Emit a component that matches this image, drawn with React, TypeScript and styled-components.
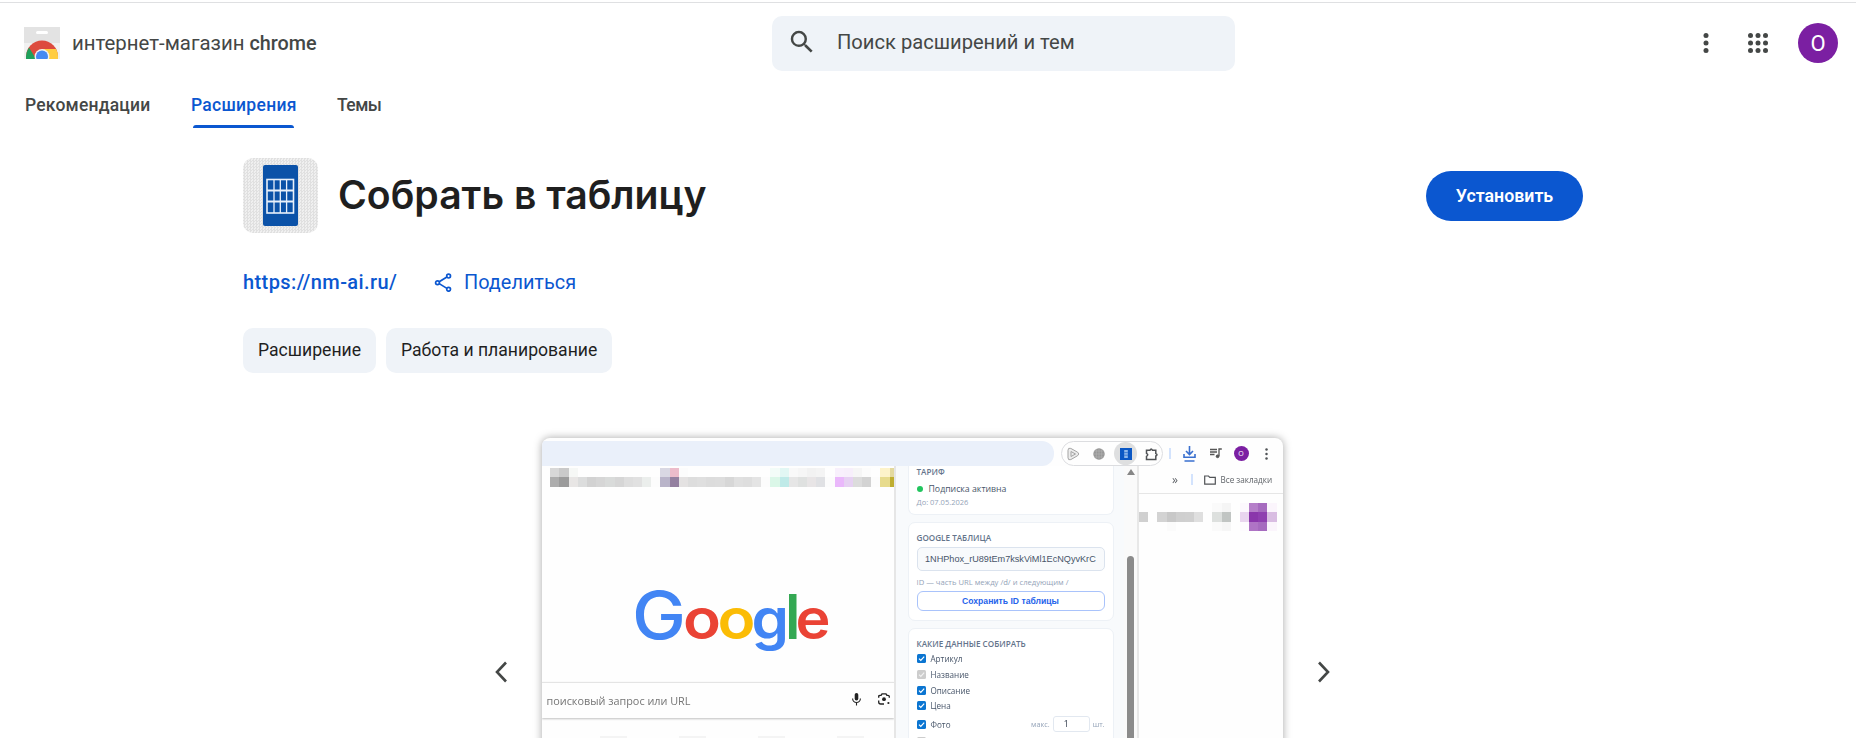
import React from 'react';
import styled, { createGlobalStyle } from 'styled-components';

const sans = `Roboto, 'Open Sans', sans-serif`;
const panelSans = `'Open Sans', 'Noto Sans', sans-serif`;
const blue = '#0b57d0';

const GlobalStyle = createGlobalStyle`
  * { box-sizing: border-box; }
  body { margin: 0; background: #fff; font-family: ${sans}; color: #1f1f1f; }
  a { color: inherit; text-decoration: none; }
  ul { list-style: none; margin: 0; padding: 0; }
`;

const Page = styled.div`
  height: 738px;
  padding-top: 2px;
  overflow: hidden;
`;

/* ---------- header ---------- */

const Header = styled.header`
  height: 85px;
  border-top: 1px solid #dfe0e2;
  display: flex;
  align-items: center;
  padding: 0 18px 4px 24px;
`;

const Brand = styled.a`
  width: 748px;
  display: flex;
  align-items: center;
  gap: 12px;
  font-size: 20.4px;
  color: #444746;
  white-space: pre;
`;

const BrandName = styled.span`
  strong { font-weight: 500; font-size: 19.8px; }
`;

const Search = styled.div`
  width: 463px;
  height: 55px;
  border-radius: 10px;
  background: #eff3f8;
  display: flex;
  align-items: center;
  gap: 20px;
  padding: 0 15px 2px;
  color: #444746;
  font-size: 20.15px;
`;

const Actions = styled.div`
  margin-left: auto;
  display: flex;
  align-items: center;
`;

const IconButton = styled.button<{ $gap: number }>`
  border: 0;
  padding: 0;
  background: none;
  display: flex;
  margin-right: ${(p) => p.$gap}px;
`;

const Avatar = styled.div`
  width: 40px;
  height: 40px;
  border-radius: 50%;
  background: #7b1fa2;
  color: #fff;
  font-size: 22px;
  display: grid;
  place-items: center;
`;

const Tabs = styled.nav`
  display: flex;
  gap: 40px;
  padding-left: 25px;
`;

const Tab = styled.a<{ $active?: boolean; $width: number; $spacing: number }>`
  width: ${(p) => p.$width}px;
  height: 41px;
  padding-top: 7px;
  line-height: 22px;
  font-size: 17.5px;
  font-weight: 500;
  letter-spacing: ${(p) => p.$spacing}px;
  white-space: nowrap;
  color: ${(p) => (p.$active ? blue : '#444746')};
  &::after {
    content: '';
    display: block;
    margin: 9px 3px 0 2px;
    height: 3px;
    border-radius: 3px 3px 0 0;
    background: ${(p) => (p.$active ? blue : 'transparent')};
  }
`;

/* ---------- listing ---------- */

const Content = styled.main`
  width: 1340px;
  margin-left: 243px;
  padding-top: 30px;
`;

const TitleRow = styled.div`
  height: 75px;
  display: flex;
  align-items: center;
`;

const AppIcon = styled.div`
  width: 75px;
  height: 75px;
  border-radius: 10px;
  background: repeating-conic-gradient(#e0e0e0 0 25%, #f0f0f0 0 50%) 0 0 / 3px 3px;
  display: grid;
  place-items: center;
`;

const Title = styled.h1`
  margin: 0 0 1px 20px;
  font: 600 39.15px/50px Inter, sans-serif;
`;

const InstallButton = styled.button`
  margin: 0 0 0 auto;
  width: 157px;
  height: 50px;
  border: 0;
  border-radius: 25px;
  background: ${blue};
  color: #fff;
  font: 600 17.8px ${sans};
`;

const Links = styled.div`
  margin-top: 36px;
  height: 26px;
  display: flex;
  align-items: center;
  color: ${blue};
  font-size: 19.9px;
`;

const Site = styled.a`
  width: 191px;
  font-weight: 500;
  font-size: 20px;
  letter-spacing: 0.4px;
`;

const Share = styled.a`
  display: flex;
  align-items: center;
  gap: 12px;
`;

const Chips = styled.div`
  margin-top: 33px;
  display: flex;
  gap: 10px;
`;

const Chip = styled.a`
  height: 45px;
  padding: 0 15px;
  border-radius: 10px;
  background: #eff3f8;
  font-size: 17.6px;
  line-height: 45px;
`;

const Carousel = styled.section`
  margin-top: 65px;
  display: flex;
  align-items: flex-start;
  padding-left: 252px;
`;

const Arrow = styled.button<{ $left: number; $right: number }>`
  border: 0;
  padding: 0;
  background: none;
  display: flex;
  margin: 223px ${(p) => p.$right}px 0 ${(p) => p.$left}px;
`;

/* ---------- carousel slide ---------- */

const Slide = styled.div`
  width: 741px;
  height: 463px;
  border-radius: 8px 8px 0 0;
  box-shadow: 0 0 8px rgba(0, 0, 0, 0.35);
  background: #fefefe;
  overflow: hidden;
`;

const Shot = styled.div`
  height: 100%;
  filter: blur(0.3px);
  font-family: ${panelSans};
`;

const BrowserBar = styled.div`
  height: 28px;
  padding-top: 3px;
  display: flex;
`;

const Omnibox = styled.div`
  width: 512px;
  height: 25px;
  margin-right: 7px;
  border-radius: 0 12px 12px 0;
  background: #eaf0fa;
`;

const Toolbar = styled.div`
  width: 102px;
  height: 25px;
  border: 1px solid #dcdde0;
  border-radius: 13px;
  display: flex;
  align-items: center;
  padding-left: 5px;
`;

const ActiveTool = styled.span`
  width: 23px;
  height: 23px;
  margin: 0 8px 0 9px;
  border-radius: 50%;
  background: #dedfe0;
  display: grid;
  place-items: center;
`;

const Divider = styled.span<{ $gap: number }>`
  width: 1.5px;
  height: 11px;
  background: #d3e3fd;
  margin: 0 ${(p) => p.$gap}px 0 6px;
`;

const BarIcons = styled.div`
  height: 25px;
  display: flex;
  align-items: center;
`;

const MiniAvatar = styled.span`
  width: 15px;
  height: 15px;
  border-radius: 50%;
  background: #7b1fa2;
  color: #fff;
  font-size: 7px;
  display: grid;
  place-items: center;
  margin: 0 16px 0 12px;
`;

const Columns = styled.div`
  display: flex;
  height: 435px;
`;

const NewTab = styled.div`
  width: 354px;
  overflow: hidden;
  border-right: 2px solid #e6e6e6;
`;

const Mosaic = styled.div<{ $top: number; $left: number }>`
  padding: ${(p) => p.$top}px 0 0 ${(p) => p.$left}px;
  overflow: hidden;
`;

const MosaicRow = styled.div`
  display: flex;
`;

const Cell = styled.i<{ $color: string }>`
  flex: none;
  width: 9.18px;
  height: 9.3px;
  background: ${(p) => p.$color};
`;

const Logo = styled.svg`
  display: block;
  margin: 98px 0 0 88px;
`;

const Prompt = styled.div`
  margin-top: 25px;
  height: 36px;
  border-top: 1px solid #e4e4e4;
  box-shadow: 0 1px 2px rgba(0, 0, 0, 0.25);
  display: flex;
  align-items: center;
  padding: 1px 4px 0 4.5px;
  color: #757575;
  font-size: 10.85px;
`;

const PromptIcons = styled.span`
  margin-left: auto;
  padding-bottom: 2px;
  display: flex;
  gap: 17px;
`;

const Shortcuts = styled.div`
  display: flex;
  gap: 52px;
  margin: 18px 0 0 58px;
  i { width: 27px; height: 9px; background: #f4f4f4; }
`;

const SidePanel = styled.div`
  width: 228px;
  padding: 0 0 0 11.5px;
  background: #f8fafc;
`;

const Card = styled.section<{ $height: number; $cut?: boolean }>`
  width: 206px;
  height: ${(p) => p.$height}px;
  margin-bottom: 7px;
  padding: ${(p) => (p.$cut ? 0 : 8.5)}px 8px 0;
  background: #fff;
  border: 1px solid #edf1f6;
  border-top-width: ${(p) => (p.$cut ? 0 : 1)}px;
  border-radius: ${(p) => (p.$cut ? '0 0 7px 7px' : '7px')};
`;

const CardTitle = styled.h2`
  margin: 0;
  font-size: 8.15px;
  line-height: 11px;
  font-weight: 600;
  color: #64748b;
  white-space: nowrap;
`;

const Status = styled.div`
  display: flex;
  align-items: center;
  gap: 6px;
  margin-top: 6px;
  font-size: 8.75px;
  line-height: 12px;
  font-weight: 500;
  color: #475569;
  &::before { content: ''; width: 6px; height: 6px; border-radius: 50%; background: #22c55e; }
`;

const Hint = styled.p<{ $top: number; $size: number }>`
  margin: ${(p) => p.$top}px 0 0;
  font-size: ${(p) => p.$size}px;
  line-height: 10px;
  color: #94a3b8;
  white-space: nowrap;
`;

const TableId = styled.div`
  margin-top: 4px;
  height: 24px;
  border: 1px solid #dbe3ee;
  border-radius: 5px;
  background: #f8fafc;
  padding: 0 7px 0 7.5px;
  font: 9.15px/23px 'Liberation Sans', sans-serif;
  color: #475569;
  white-space: nowrap;
`;

const SaveButton = styled.button`
  display: block;
  width: 100%;
  height: 20px;
  margin-top: 4px;
  padding: 0;
  border: 1.5px solid #a9c3fb;
  border-radius: 6px;
  background: #fff;
  color: #2563eb;
  font: 700 8.6px 'Liberation Sans', sans-serif;
`;

const FieldList = styled.ul`
  && { margin-top: 2.5px; }
`;

const Field = styled.li<{ $height: number }>`
  height: ${(p) => p.$height}px;
  display: flex;
  align-items: center;
  gap: 5px;
  font-size: 8.1px;
  color: #475569;
`;

const Amount = styled.span`
  margin-left: auto;
  display: flex;
  align-items: center;
  gap: 3px;
  font-size: 7.3px;
  color: #94a3b8;
  b {
    width: 37px;
    height: 16px;
    border: 1px solid #e2e8f0;
    border-radius: 3px;
    padding-right: 10px;
    font-size: 8.5px;
    font-weight: 500;
    line-height: 14px;
    text-align: center;
    color: #1e293b;
  }
`;

const Scroller = styled.div`
  width: 15px;
  padding-top: 3px;
  display: flex;
  flex-direction: column;
  align-items: center;
  gap: 81px;
  background: #fafafa;
  border-right: 2px solid #e8e8e8;
`;

const ScrollUp = styled.span`
  border: 4px solid transparent;
  border-top: 0;
  border-bottom: 6px solid #868686;
`;

const Thumb = styled.span`
  width: 6.5px;
  flex: 1;
  border-radius: 4px;
  background: #8b8b8b;
`;

const Remainder = styled.div`
  flex: 1;
  overflow: hidden;
`;

const Bookmarks = styled.div`
  height: 28px;
  border-bottom: 1px solid #e6e6e6;
  display: flex;
  align-items: center;
  padding-left: 33px;
  font-size: 8.15px;
  color: #5f6368;
  white-space: nowrap;
`;

const More = styled.span`
  width: 13px;
  font-size: 12px;
  line-height: 12px;
`;

/* ---------- icons ---------- */

const StoreLogo = () => (
  <svg width="36" height="32" viewBox="0 0 36 32">
    <rect width="36" height="32" fill="#f1f1f1" />
    <rect width="36" height="16" fill="#e3e3e3" />
    <rect x="12" y="4" width="12" height="3" rx="1.5" fill="#fff" />
    <circle cx="18" cy="29.500" r="16" fill="#dd4b3e" />
    <path d="M2 32V29.500Q2 25 5 20.500L12 32z" fill="#1fa05b" />
    <path d="M18 22h14.100Q34 25.500 34 29.500V32H18z" fill="#ffcd41" />
    <circle cx="18" cy="29.500" r="7.400" fill="#f1f1f1" />
    <circle cx="18" cy="29.500" r="6" fill="#4689f2" />
  </svg>
);

const SearchIcon = () => (
  <svg width="30" height="30" viewBox="0 0 24 24" fill="#444746">
    <path d="M15.5 14h-.79l-.28-.27A6.47 6.47 0 0 0 16 9.5 6.5 6.5 0 1 0 9.5 16c1.61 0 3.09-.59 4.23-1.57l.27.28v.79l5 4.99L20.49 19l-4.99-5zm-6 0C7.01 14 5 11.99 5 9.5S7.01 5 9.5 5 14 7.01 14 9.5 11.99 14 9.5 14z" />
  </svg>
);

const Dots = ({ cols }: { cols: number[] }) => (
  <svg width="30" height="30" viewBox="0 0 30 30" fill="#444746">
    {cols.map((x) => [7.5, 15, 22.5].map((y) => <circle key={`${x}-${y}`} cx={x} cy={y} r="2.5" />))}
  </svg>
);

const GridIcon = () => (
  <svg width="35" height="62" viewBox="0 0 35 62">
    <rect width="35" height="61" rx="2" fill="#0b52a8" />
    <g fill="none" stroke="#e8f0fa">
      <rect x="4" y="14.5" width="26.5" height="33.5" strokeWidth="1.6" />
      <path d="M11 15v33M17.3 15v33M23.6 15v33" strokeWidth="1.3" />
      <path d="M4 25.6h26.5M4 36.6h26.5" strokeWidth="2" />
    </g>
  </svg>
);

const ShareIcon = () => (
  <svg width="18" height="20" viewBox="0 0 18 20" fill="none" stroke={blue} strokeWidth="1.7">
    <circle cx="14.6" cy="4.1" r="1.9" />
    <circle cx="3.500" cy="10.7" r="1.9" />
    <circle cx="14.6" cy="17.3" r="1.9" />
    <path d="M5.200 9.800 12.900 5M5.200 11.600l7.700 4.800" />
  </svg>
);

const Chevron = ({ flip }: { flip?: boolean }) => (
  <svg width="12" height="22" viewBox="0 0 12 22" fill="none" stroke="#444746" strokeWidth="2.6">
    <path d={flip ? 'M1 1.5 10 11 1 20.5' : 'M11 1.5 2 11l9 9.5'} />
  </svg>
);

const PlayTool = () => (
  <svg width="13" height="14" viewBox="0 0 13 14" fill="#ececec" stroke="#a3a3a3">
    <path d="M1 3.2Q1 .4 3.8 1.4l6.800 3.800Q13 7 10.600 8.700L3.800 12.600Q1 13.600 1 10.800z" />
    <path d="m4 4.500 4.500 2.500L4 9.500z" fill="none" />
  </svg>
);

const GlobeTool = () => (
  <svg width="12" height="12" viewBox="0 0 12 12">
    <circle cx="6" cy="6" r="5.700" fill="#969696" />
    <path d="M0 6h12M6 0v12M1 3h10M1 9h10M3.300 1v10M8.700 1v10" stroke="#b5b5b5" strokeWidth=".6" />
  </svg>
);

const ToolGap = styled.span`
  width: 13px;
`;

const TableTool = () => (
  <svg width="12" height="12" viewBox="0 0 12 12">
    <rect width="12" height="12" fill="#0b57c4" />
    <rect x="4.200" y="2" width="3.600" height="8" fill="#8db6ea" />
    <path d="M4.200 4.600h3.600M4.200 7.200h3.600" stroke="#0b57c4" strokeWidth=".6" />
  </svg>
);

const PuzzleTool = () => (
  <svg width="14" height="14" viewBox="0 0 14 14" fill="none" stroke="#505356" strokeWidth="1.500">
    <path d="M1.500 3.200H5Q6.200.800 7.400 3.200h3.400v3.400q2.400 1 0 2.400v3.400H1.500V9.300Q4 7.800 1.500 6.300z" />
  </svg>
);

const DownloadIcon = () => (
  <svg width="13" height="16" viewBox="0 0 13 16" fill="none" stroke="#3a70cf" strokeWidth="1.600">
    <path d="M6.500 0v8M3 5l3.500 3.500L10 5M1 8v3.200h11V8M1.500 15h10" />
  </svg>
);

const MusicIcon = () => (
  <svg width="12" height="11" viewBox="0 0 12 11" stroke="#555" fill="#555">
    <path d="M0 1.500h7M0 4h7M0 6.500h4.500M9 8V1h2.800" fill="none" strokeWidth="1.300" />
    <circle cx="7.600" cy="8.300" r="1.400" />
  </svg>
);

const MoreIcon = () => (
  <svg width="3" height="12" viewBox="0 0 3 12" fill="#505356">
    <circle cx="1.500" cy="1.500" r="1.250" /><circle cx="1.500" cy="6" r="1.250" /><circle cx="1.500" cy="10.500" r="1.250" />
  </svg>
);

const FolderIcon = () => (
  <svg width="12" height="10" viewBox="0 0 12 10" fill="none" stroke="#505356" strokeWidth="1.200">
    <path d="M.7 1h3.800l1.300 1.300h5.500V9.200H.7z" />
  </svg>
);

const MicIcon = () => (
  <svg width="9" height="13" viewBox="0 0 9 13">
    <rect x="2.700" y="0" width="3.600" height="7.600" rx="1.800" fill="#222" />
    <path d="M.6 5.600a3.900 3.900 0 0 0 7.800 0M4.500 9.500V12.500" fill="none" stroke="#222" strokeWidth="1.100" />
  </svg>
);

const LensIcon = () => (
  <svg width="12" height="12" viewBox="0 0 12 12" fill="none" stroke="#222" strokeWidth="1.300">
    <path d="M.7 4.800V3.500q0-1.200 1.400-1.200h1L4 .8h4l.9 1.500h1q1.400 0 1.400 1.200v1.300M.7 7.600V9q0 2 2 2H6" />
    <circle cx="6" cy="6.200" r="1.900" fill="#222" stroke="none" />
    <circle cx="10.400" cy="10" r="1.100" fill="#222" stroke="none" />
  </svg>
);

const Check = ({ off }: { off?: boolean }) => (
  <svg width="9" height="9" viewBox="0 0 9 9">
    <rect width="9" height="9" rx="1.500" fill={off ? '#cdcdcd' : '#0b75d1'} />
    <path d="m2 4.600 1.800 1.800L7.200 2.600" fill="none" stroke={off ? '#f2f2f2' : '#fff'} strokeWidth="1.200" />
  </svg>
);

const logoLetters = [
  { char: 'G', x: 2, width: 54, size: 66, weight: 500, color: '#4285f4' },
  { char: 'o', x: 53, width: 38, size: 56, weight: 600, color: '#ea4335' },
  { char: 'o', x: 87.5, width: 38, size: 56, weight: 600, color: '#fbbc05' },
  { char: 'g', x: 121.500, width: 37.5, size: 56, weight: 600, color: '#4285f4' },
  { char: 'l', x: 154, width: 17.500, size: 62, weight: 500, color: '#34a853' },
  { char: 'e', x: 165.500, width: 35, size: 56, weight: 600, color: '#ea4335' },
];

const GoogleLogo = () => (
  <Logo width="210" height="72" viewBox="0 0 210 72" fontFamily="Inter, sans-serif">
    {logoLetters.map((l) => (
      <text
        key={l.x} x={l.x} y="54" fontSize={l.size} fontWeight={l.weight} fill={l.color}
        textLength={l.width} lengthAdjust="spacingAndGlyphs"
      >
        {l.char}
      </text>
    ))}
  </Logo>
);

/* ---------- pixelated strips ---------- */

const n = 'transparent';
const bookmarkPixels = [
  ['#d8d8d8', '#cacaca', '#f6f8f6', n, n, n, n, n, n, n, n, n, '#d9d8e3', '#ecbccb', '#fcfcfc', n, n, n, n, n, n, n, n, n,
    '#f3fcf8', '#e2f7f4', '#f9f9f9', '#f6f6f6', '#f2f2f2', '#f4f4f4', n, '#f8f0fc', '#f7effb', '#f6f6f6', '#fcfcfc', n, '#fdf3ca', '#e3d99e'],
  ['#adadad', '#9b9b9b', '#e8e6e5', '#dcdddd', '#d2d2d2', '#d6d6d6', '#d9dbda', '#d6d6d6', '#dedede', '#e1e1e1', '#ebeeec', '#fcfcfc',
    '#b9b4c9', '#9480a0', '#e4e2e2', '#dddddd', '#dfdfdf', '#dcdcdc', '#dddddd', '#d7d7d7', '#e0e0e0', '#dedede', '#e4e4e4', '#fcfcfc',
    '#dbf7e8', '#bfeae8', '#e6e6e6', '#dfe1e0', '#e8e5e6', '#e0e1e4', '#fcfcfc', '#eab8fb', '#e6d1f2', '#dcdcdc', '#d3d3d3', '#fcfcfc', '#e7db8d', '#bfae31'],
];

const profilePixels = [
  [n, n, n, n, n, n, n, n, '#fafafa', '#f5f5f5', n, '#fcf8fd', '#b57fc9', '#a66bbf', '#fbf5fc'],
  ['#d0d0d0', n, '#d3d3d3', '#c8c8c8', '#cfcfcf', '#d0d0d0', '#dfdfdf', n, '#dde0de', '#c1c5c3', n, '#e9d5ef', '#8a37ab', '#8f3fb0', '#d9bde2'],
  [n, n, n, '#fbfbfb', n, n, n, n, '#fafafa', '#f6f6f6', n, '#fdfbfe', '#af74c5', '#a66bbf', '#fbf5fc'],
];

const Pixels = ({ rows, top, left }: { rows: string[][]; top: number; left: number }) => (
  <Mosaic $top={top} $left={left}>
    {rows.map((row, y) => (
      <MosaicRow key={y}>{row.map((c, x) => <Cell key={x} $color={c} />)}</MosaicRow>
    ))}
  </Mosaic>
);

const IconGap = styled.span<{ $size: number }>`
  width: ${(p) => p.$size}px;
`;

const fields = [
  { label: 'Артикул', height: 15.7 },
  { label: 'Название', height: 15.7, off: true },
  { label: 'Описание', height: 15.7 },
  { label: 'Цена', height: 15.7 },
];

const BrowserShot = () => (
  <Shot>
    <BrowserBar>
      <Omnibox />
      <Toolbar>
        <PlayTool /><ToolGap /><GlobeTool /><ActiveTool><TableTool /></ActiveTool><PuzzleTool />
      </Toolbar>
      <BarIcons>
        <Divider $gap={12} />
        <DownloadIcon />
        <IconGap $size={14} />
        <MusicIcon />
        <MiniAvatar>O</MiniAvatar>
        <MoreIcon />
      </BarIcons>
    </BrowserBar>
    <Columns>
      <NewTab>
        <Pixels rows={bookmarkPixels} top={2} left={8.3} />
        <GoogleLogo />
        <Prompt>
          поисковый запрос или URL
          <PromptIcons><MicIcon /><LensIcon /></PromptIcons>
        </Prompt>
        <Shortcuts><i /><i /><i /><i /></Shortcuts>
      </NewTab>
      <SidePanel>
        <Card $height={49} $cut>
          <CardTitle>ТАРИФ</CardTitle>
          <Status>Подписка активна</Status>
          <Hint $top={1.5} $size={7.5}>До: 07.05.2026</Hint>
        </Card>
        <Card $height={99}>
          <CardTitle>GOOGLE ТАБЛИЦА</CardTitle>
          <TableId>1NHPhox_rU89tEm7kskViMl1EcNQyvKrC</TableId>
          <Hint $top={6.5} $size={7.65}>ID — часть URL между /d/ и следующим /</Hint>
          <SaveButton>Сохранить ID таблицы</SaveButton>
        </Card>
        <Card $height={200}>
          <CardTitle>КАКИЕ ДАННЫЕ СОБИРАТЬ</CardTitle>
          <FieldList>
            {fields.map((f) => (
              <Field key={f.label} $height={f.height}><Check off={f.off} />{f.label}</Field>
            ))}
            <Field $height={21}>
              <Check />Фото
              <Amount>макс.<b>1</b>шт.</Amount>
            </Field>
            <Field $height={13}><Check off /></Field>
          </FieldList>
        </Card>
      </SidePanel>
      <Scroller><ScrollUp /><Thumb /></Scroller>
      <Remainder>
        <Bookmarks>
          <More>»</More>
          <Divider $gap={11} />
          <FolderIcon />
          <IconGap $size={5} />
          Все закладки
        </Bookmarks>
        <Pixels rows={profilePixels} top={9} left={0} />
      </Remainder>
    </Columns>
  </Shot>
);

export default function App() {
  return (
    <Page>
      <GlobalStyle />
      <Header>
        <Brand href="#"><StoreLogo /><BrandName>интернет-магазин <strong>chrome</strong></BrandName></Brand>
        <Search><SearchIcon />Поиск расширений и тем</Search>
        <Actions>
          <IconButton $gap={22}><Dots cols={[15]} /></IconButton>
          <IconButton $gap={25}><Dots cols={[7.5, 15, 22.5]} /></IconButton>
          <Avatar>O</Avatar>
        </Actions>
      </Header>
      <Tabs>
        <Tab $width={126} $spacing={0.2}>Рекомендации</Tab>
        <Tab $width={106} $spacing={0.28} $active>Расширения</Tab>
        <Tab $width={44} $spacing={-0.5}>Темы</Tab>
      </Tabs>
      <Content>
        <TitleRow>
          <AppIcon><GridIcon /></AppIcon>
          <Title>Собрать в таблицу</Title>
          <InstallButton>Установить</InstallButton>
        </TitleRow>
        <Links>
          <Site href="#">https://nm-ai.ru/</Site>
          <Share href="#"><ShareIcon />Поделиться</Share>
        </Links>
        <Chips>
          <Chip>Расширение</Chip>
          <Chip>Работа и планирование</Chip>
        </Chips>
        <Carousel>
          <Arrow $left={0} $right={35}><Chevron /></Arrow>
          <Slide><BrowserShot /></Slide>
          <Arrow $left={35} $right={0}><Chevron flip /></Arrow>
        </Carousel>
      </Content>
    </Page>
  );
}
